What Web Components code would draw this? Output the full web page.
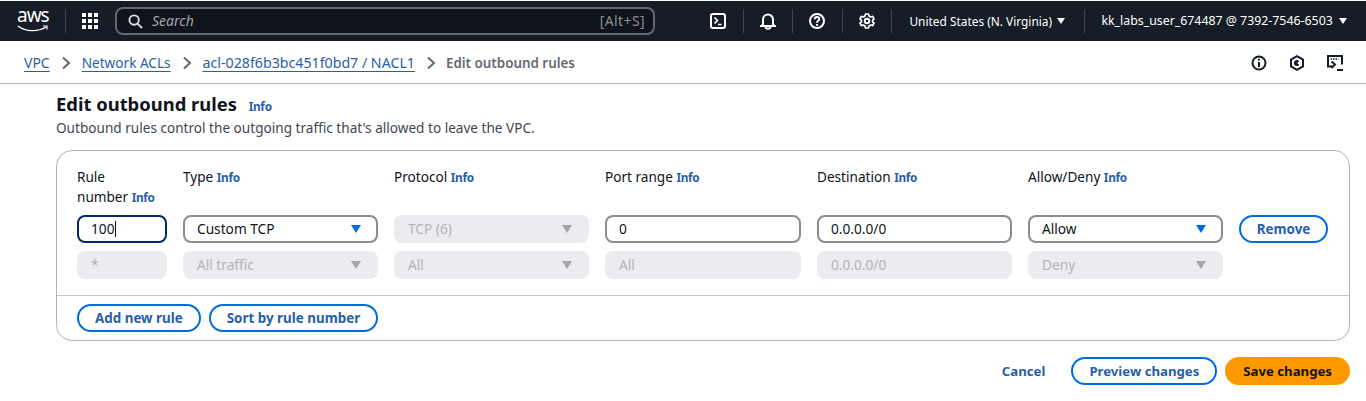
<!DOCTYPE html>
<html lang="en">
<head>
<meta charset="utf-8">
<title>Edit outbound rules</title>
<style>
  html, body { margin: 0; background: #fff; }
  body { font: 14px/20px "Noto Sans", "Open Sans", sans-serif; color: #0f141a; overflow: hidden; }
</style>
</head>
<body>
<console-nav></console-nav>
<crumb-bar></crumb-bar>
<rules-page></rules-page>

<script>
function define(name, html) {
  const template = document.createElement('template');
  template.innerHTML = html;
  customElements.define(name, class extends HTMLElement {
    constructor() {
      super();
      this.attachShadow({mode: 'open'}).append(template.content.cloneNode(true));
    }
  });
}

define('console-nav', `
  <style>
    :host { display: flex; align-items: center; height: 40px; box-sizing: border-box; margin-top: 1px; background: #161d26; color: #fff; font-size: 12px; }
    .logo { width: 65px; box-sizing: border-box; padding-left: 17px; display: flex; flex-direction: column; align-items: flex-start; height: 32px; flex: none; }
    .logo span { font: 19px/19px "Noto Sans", sans-serif; letter-spacing: -1px; display: block; height: 20px; margin-top: 1px; }
    .logo svg { display: block; margin-top: -1px; }
    .sep { width: 1px; height: 24px; background: #424650; flex: none; }
    .grid { width: 48px; display: flex; justify-content: center; flex: none; }
    .search { box-sizing: border-box; width: 540px; height: 28px; margin-left: 1px; border: 2px solid #656871; border-radius: 8px; background: #0f141a; display: flex; align-items: center; padding: 0 8px 0 11px; font-size: 14px; flex: none; }
    .search svg { margin-right: 9px; stroke: #dedee3; }
    .search i { color: #a4a6ac; flex: 1; }
    .search b { color: #8c8f96; font-weight: 400; letter-spacing: .4px; }
    .tool { width: 48.600px; display: flex; justify-content: center; flex: none; }
    .t1 { margin-left: 39px; }
    .menu { display: flex; align-items: center; white-space: nowrap; }
    .caret { width: 0; height: 0; border: 4.500px solid transparent; border-top: 6px solid #fff; border-bottom: 0; margin-left: 5px; }
    .region { width: 192px; box-sizing: border-box; padding-left: 17px; font-size: 11.900px; flex: none; }
    .account { padding-left: 16px; font-size: 12.350px; }
    svg { fill: none; stroke: #fff; stroke-width: 2; }
  </style>
  <div class="logo"><span>aws</span>
    <svg width="32" height="8" viewBox="0 0 32 8"><path d="M1 1c8 6 20 6 28 1" stroke-width="1.400"/><path d="M26 1h4v3.500" stroke-width="1.200"/></svg>
  </div>
  <div class="sep"></div>
  <div class="grid">
    <svg width="16" height="16" viewBox="0 0 16 16" style="fill:#fff;stroke:none"><path d="M0 0h4v4H0zM6 0h4v4H6zM12 0h4v4h-4zM0 6h4v4H0zM6 6h4v4H6zM12 6h4v4h-4zM0 12h4v4H0zM6 12h4v4H6zM12 12h4v4h-4z"/></svg>
  </div>
  <div class="search">
    <svg width="15" height="15" viewBox="0 0 16 16"><circle cx="6.500" cy="6.500" r="5"/><path d="M10.200 10.200 15 15"/></svg>
    <i>Search</i><b>[Alt+S]</b>
  </div>
  <div class="tool t1"><svg width="16" height="16" viewBox="0 0 16 16"><rect x="1" y="1" width="14" height="14" rx="2"/><path d="m4.500 4.500 3 3-3 3M8 11.500h3.500" stroke-width="1.600"/></svg></div>
  <div class="sep"></div>
  <div class="tool"><svg width="16" height="17" viewBox="0 0 16 17"><path d="M3 11.500V6.500a5 5 0 0 1 10 0v5l2 1.500H1zM5.500 13.500c.2 3 4.800 3 5 0"/></svg></div>
  <div class="sep"></div>
  <div class="tool"><svg width="16" height="16" viewBox="0 0 16 16"><circle cx="8" cy="8" r="7"/><path d="M5.800 6.200c0-3 4.500-3 4.500-.2 0 1.800-2.300 1.700-2.300 3.700M8 11v1.800"/></svg></div>
  <div class="sep"></div>
  <div class="tool"><svg width="16" height="16" viewBox="0 0 16 16"><circle cx="8" cy="8" r="2.200"/><path d="M6.500 1h3l.5 2 1.700 1 2-.6 1.300 2.400-1.400 1.400v1.600l1.400 1.400-1.300 2.400-2-.6-1.700 1-.5 2h-3l-.5-2-1.700-1-2 .6L1 10.200l1.400-1.400V7.200L1 5.800l1.300-2.400 2 .6 1.700-1z" stroke-width="1.700" stroke-linejoin="round"/></svg></div>
  <div class="sep"></div>
  <div class="menu region">United States (N. Virginia)<span class="caret"></span></div>
  <div class="sep"></div>
  <div class="menu account">kk_labs_user_674487 @ 7392-7546-6503<span class="caret" style="margin-left:6px"></span></div>
`);

define('crumb-bar', `
  <style>
    :host { display: flex; align-items: center; height: 43px; box-sizing: border-box; border-bottom: 1px solid #b4b4bb; padding: 1px 23px 0 24px; font-size: 14px; }
    a { color: #295ea8; text-decoration: underline; text-underline-offset: 3px; text-decoration-thickness: 1px; }
    .net { font-size: 13.600px; }
    .acl { font-size: 14.200px; }
    svg.chev { margin: 0 11px; fill: none; stroke: #656871; stroke-width: 2; flex: none; }
    b { color: #656871; font-weight: 600; font-size: 13.400px; margin-left: -1px; }
    .tools { margin-left: auto; display: flex; gap: 22px; align-items: center; }
    .tools svg { fill: none; stroke: #161d26; stroke-width: 2; display: block; }
  </style>
  <a>VPC</a>
  <svg class="chev" width="10" height="14" viewBox="0 0 10 14"><path d="m2 1.500 6 5.500-6 5.500"/></svg>
  <a class="net">Network ACLs</a>
  <svg class="chev" width="10" height="14" viewBox="0 0 10 14"><path d="m2 1.500 6 5.500-6 5.500"/></svg>
  <a class="acl">acl-028f6b3bc451f0bd7 / NACL1</a>
  <svg class="chev" width="10" height="14" viewBox="0 0 10 14"><path d="m2 1.500 6 5.500-6 5.500"/></svg>
  <b>Edit outbound rules</b>
  <div class="tools">
    <svg width="16" height="16" viewBox="0 0 16 16"><circle cx="8" cy="8" r="6.500"/><path d="M8 7v5M8 3.800v1.800"/></svg>
    <svg width="16" height="16" viewBox="0 0 16 16"><path d="M8 1.200 14 4.600v6.800L8 14.800l-6-3.400V4.600z"/><path d="M10.300 6.300A3 3 0 1 0 10.300 9.700L8 8z" fill="#161d26" stroke="none"/></svg>
    <svg width="16" height="16" viewBox="0 0 16 16"><path d="M5.500 11.500H1V1h14v8.500"/><path d="M3.500 4h8" stroke-dasharray="1.500 1" stroke-width="1.500"/><path d="m4.500 6.500 3.500 3-3.500 3.500M10 15h6"/></svg>
  </div>
`);

define('info-link', `
  <style>
    :host { display: inline; color: #295ea8; font-size: 11.800px; font-weight: 700; letter-spacing: -.3px; }
  </style>
  Info
`);

define('field-label', `
  <style>
    :host { display: block; color: #0f141a; font-size: 13.600px; line-height: 20px; }
  </style>
  <slot></slot>
`);

define('text-field', `
  <style>
    :host { display: flex; align-items: center; box-sizing: border-box; height: 28px; padding: 0 12px; border: 2px solid #8c8c94; border-radius: 8px; background: #fff; color: #0f141a; font-size: 13.700px; }
    :host([focused]) { border-color: #002a66; }
    :host([disabled]) { border-color: #ebebf0; background: #ebebf0; color: #b4b4bb; }
    .cursor { display: none; width: 1px; height: 16px; background: #0f141a; }
    :host([focused]) .cursor { display: block; }
  </style>
  <slot></slot><span class="cursor"></span>
`);

define('select-field', `
  <style>
    :host { display: flex; align-items: center; justify-content: space-between; box-sizing: border-box; height: 28px; padding: 0 15px 0 12px; border: 2px solid #8c8c94; border-radius: 8px; background: #fff; color: #0f141a; font-size: 13.700px; }
    :host([disabled]) { border-color: #ebebf0; background: #ebebf0; color: #b4b4bb; }
    .caret { width: 0; height: 0; border: 5.500px solid transparent; border-top: 8px solid #006ce0; border-bottom: 0; }
    :host([disabled]) .caret { border-top-color: #a4a4ad; }
  </style>
  <slot></slot><span class="caret"></span>
`);

define('pill-button', `
  <style>
    :host { display: inline-flex; align-items: center; justify-content: center; box-sizing: border-box; height: 28px; padding: 0 16px; border: 2px solid #006ce0; border-radius: 14px; background: #fff; color: #295ea8; font-size: 13.400px; font-weight: 700; white-space: nowrap; }
    :host([variant="primary"]) { background: #ff9900; border-color: #ff9900; color: #0f141a; }
    :host([variant="link"]) { border-color: transparent; background: none; }
  </style>
  <slot></slot>
`);

define('rules-card', `
  <style>
    :host { display: block; margin: 12px 16px 0 56px; border: 1px solid #b4b4bb; border-radius: 16px; }
    .rows { display: grid; grid-template-columns: 90px 195px 195px 196px 195px 195px 89px; column-gap: 16px; row-gap: 8px; padding: 16px 20px; border-bottom: 1px solid #c6c6cd; align-items: start; }
    .foot { display: flex; gap: 8px; padding: 8px 20px; }
  </style>
  <div class="rows"><slot name="cells"></slot></div>
  <div class="foot"><slot name="actions"></slot></div>
`);

define('rules-page', `
  <style>
    :host { display: block; }
    .head { padding: 8px 0 0 56px; }
    h1 { margin: 0; font-size: 18.400px; line-height: 23px; font-weight: 700; color: #0f141a; }
    h1 info-link { margin-left: 7px; }
    p { margin: 0; font-size: 13.600px; line-height: 20px; color: #424650; }
    .footer { display: flex; justify-content: flex-end; align-items: center; gap: 8px; margin: 16px 16px 0 0; }
    .footer pill-button { font-size: 13.200px; }
  </style>
  <div class="head">
    <h1>Edit outbound rules <info-link></info-link></h1>
    <p>Outbound rules control the outgoing traffic that's allowed to leave the VPC.</p>
  </div>
  <rules-card>
    <field-label slot="cells" style="height:40px">Rule<br>number <info-link></info-link></field-label>
    <field-label slot="cells">Type <info-link></info-link></field-label>
    <field-label slot="cells">Protocol <info-link></info-link></field-label>
    <field-label slot="cells">Port range <info-link></info-link></field-label>
    <field-label slot="cells">Destination <info-link></info-link></field-label>
    <field-label slot="cells">Allow/Deny <info-link></info-link></field-label>
    <span slot="cells"></span>

    <text-field slot="cells" focused>100</text-field>
    <select-field slot="cells">Custom TCP</select-field>
    <select-field slot="cells" disabled>TCP (6)</select-field>
    <text-field slot="cells">0</text-field>
    <text-field slot="cells">0.0.0.0/0</text-field>
    <select-field slot="cells">Allow</select-field>
    <pill-button slot="cells">Remove</pill-button>

    <text-field slot="cells" disabled>*</text-field>
    <select-field slot="cells" disabled>All traffic</select-field>
    <select-field slot="cells" disabled>All</select-field>
    <text-field slot="cells" disabled>All</text-field>
    <text-field slot="cells" disabled>0.0.0.0/0</text-field>
    <select-field slot="cells" disabled>Deny</select-field>
    <span slot="cells"></span>

    <pill-button slot="actions">Add new rule</pill-button>
    <pill-button slot="actions">Sort by rule number</pill-button>
  </rules-card>
  <div class="footer">
    <pill-button variant="link">Cancel</pill-button>
    <pill-button>Preview changes</pill-button>
    <pill-button variant="primary">Save changes</pill-button>
  </div>
`);
</script>
</body>
</html>
